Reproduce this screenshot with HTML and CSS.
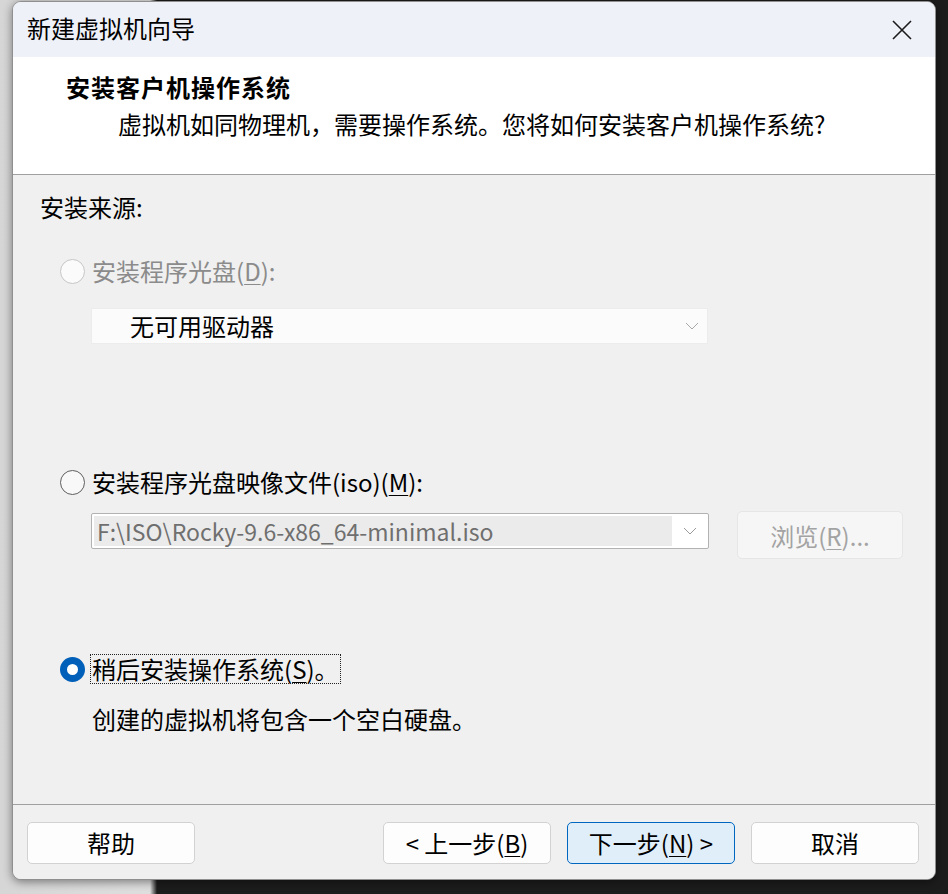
FILE: index.html
```html
<!DOCTYPE html>
<html lang="zh-CN">
<head>
<meta charset="utf-8">
<title>新建虚拟机向导</title>
<link rel="stylesheet" href="styles.css">
</head>
<body>
<div class="backdrop">
  <div class="window">
    <div class="titlebar">
      <span class="title">新建虚拟机向导</span>
      <span class="close" aria-label="关闭">
        <svg width="22" height="22" viewBox="0 0 22 22"><path d="M2 2 L20 20 M20 2 L2 20" stroke="#1b1b1b" stroke-width="1.6" fill="none"/></svg>
      </span>
    </div>
    <div class="header">
      <div class="h-title">安装客户机操作系统</div>
      <div class="h-sub">虚拟机如同物理机，需要操作系统。您将如何安装客户机操作系统?</div>
    </div>
    <div class="content">
      <div class="section-label">安装来源:</div>

      <div class="radio-row disabled row-disc">
        <span class="radio"></span>
        <span class="label">安装程序光盘(<u>D</u>):</span>
      </div>
      <div class="select disabled-select">
        <span class="select-text">无可用驱动器</span>
        <svg class="chev" width="14" height="8" viewBox="0 0 14 8"><path d="M1 1 L7 7 L13 1" stroke="#a8a8a8" stroke-width="1" fill="none"/></svg>
      </div>

      <div class="radio-row row-iso">
        <span class="radio"></span>
        <span class="label">安装程序光盘映像文件(iso)(<u>M</u>):</span>
      </div>
      <div class="iso-row">
        <div class="combo">
          <span class="combo-field">F:\ISO\Rocky-9.6-x86_64-minimal.iso</span>
          <span class="combo-btn">
            <svg width="14" height="8" viewBox="0 0 14 8"><path d="M1 1 L7 7 L13 1" stroke="#9a9a9a" stroke-width="1" fill="none"/></svg>
          </span>
        </div>
        <div class="browse">浏览(<u>R</u>)...</div>
      </div>

      <div class="radio-row row-later">
        <span class="radio checked"></span>
        <span class="label focus">稍后安装操作系统(<u>S</u>)。</span>
      </div>
      <div class="desc">创建的虚拟机将包含一个空白硬盘。</div>
    </div>
    <div class="footer">
      <div class="btn">帮助</div>
      <div class="spacer"></div>
      <div class="btn">&lt; 上一步(<u>B</u>)</div>
      <div class="btn primary">下一步(<u>N</u>) &gt;</div>
      <div class="btn">取消</div>
    </div>
  </div>
</div>
</body>
</html>
```
FILE: styles.css
```css
* { box-sizing: border-box; }
html, body { margin: 0; padding: 0; }
body {
  width: 948px;
  height: 894px;
  overflow: hidden;
  font-family: "Noto Sans CJK SC", "Noto Sans", sans-serif;
  font-size: 24px;
  color: #000;
  background: linear-gradient(90deg, #d6d6d6 0, #dedede 150px, #1c1c1c 157px, #1c1c1c 100%);
}
.backdrop {
  padding: 1px 0 0 12px;
  height: 894px;
}
.window {
  width: 924px;
  height: 879px;
  border: 1px solid #8f8f8f;
  border-radius: 9px;
  overflow: hidden;
  background: #f0f0f0;
  display: flex;
  flex-direction: column;
  box-shadow: 0 2px 10px rgba(0,0,0,0.45);
}
.titlebar {
  height: 55px;
  flex: none;
  background: #eff1f8;
  display: flex;
  align-items: center;
  padding-left: 14px;
  padding-right: 22px;
}
.title {
  flex: 1;
  line-height: 30px;
  padding-bottom: 3px;
}
.close {
  display: flex;
  width: 22px;
  height: 22px;
}
.header {
  height: 118px;
  flex: none;
  background: #ffffff;
  border-bottom: 1px solid #a0a0a0;
  padding-top: 15px;
}
.h-title {
  font-weight: bold;
  line-height: 30px;
  padding-left: 53px;
  letter-spacing: 1px;
}
.h-sub {
  line-height: 30px;
  padding-left: 105px;
  margin-top: 7px;
}
.content {
  height: 630px;
  flex: none;
  background: #f0f0f0;
  border-bottom: 1px solid #a0a0a0;
  padding-top: 17px;
  padding-left: 27px;
  display: flex;
  flex-direction: column;
  align-items: flex-start;
}
.section-label { line-height: 30px; }
.radio-row {
  display: flex;
  align-items: center;
  height: 30px;
  padding-left: 20px;
  gap: 5px;
}
.row-disc { margin-top: 34px; }
.row-iso { margin-top: 123px; }
.row-later { margin-top: 95px; }
.radio {
  width: 25px;
  height: 25px;
  border-radius: 50%;
  border: 1.5px solid #5e5e5e;
  background: #f8f8f8;
  flex: none;
}
.radio-row.disabled .radio {
  border-color: #c6c6c6;
  background: #fbfbfb;
}
.radio.checked {
  border: 7px solid #005fb8;
  background: #ffffff;
}
.label {
  line-height: 30px;
  padding: 0 2px;
}
.radio-row.disabled .label { color: #8b8b8b; }
.label.focus { outline: 1px dotted #222; outline-offset: -1px; }
u { text-underline-offset: 3px; text-decoration-thickness: 1px; }

.select {
  margin-top: 22px;
  margin-left: 51px;
  width: 617px;
  height: 36px;
  display: flex;
  align-items: center;
  background: #fbfbfb;
  border: 1px solid #ececec;
  padding-left: 38px;
  padding-right: 8px;
}
.select-text { flex: 1; line-height: 30px; }
.chev { flex: none; }

.iso-row {
  margin-top: 14px;
  margin-left: 51px;
  display: flex;
  align-items: flex-start;
  gap: 28px;
}
.combo {
  margin-top: 2px;
  width: 618px;
  height: 36px;
  border: 1px solid #b2b2b2;
  border-radius: 2px;
  background: #ffffff;
  display: flex;
  padding: 2px 0 2px 2px;
}
.combo-field {
  width: 578px;
  background: #ebebeb;
  color: #6f6f6f;
  line-height: 30px;
  padding-left: 3px;
  font-size: 23px;
  white-space: nowrap;
}
.combo-btn {
  flex: 1;
  display: flex;
  align-items: center;
  justify-content: center;
}
.browse {
  width: 166px;
  height: 48px;
  border: 1px solid #e6e6e6;
  border-radius: 5px;
  background: #f6f6f6;
  color: #a3a3a3;
  display: flex;
  align-items: center;
  justify-content: center;
}
.desc {
  margin-top: 20px;
  margin-left: 52px;
  line-height: 30px;
}
.footer {
  flex: 1;
  display: flex;
  align-items: flex-start;
  padding: 17px 16px 0 14px;
  gap: 16px;
  background: #f0f0f0;
}
.spacer { flex: 1; }
.btn {
  width: 168px;
  height: 42px;
  border: 1px solid #d2d2d2;
  border-radius: 5px;
  background: #fdfdfd;
  display: flex;
  align-items: center;
  justify-content: center;
  line-height: 30px;
}
.btn.primary {
  background: #e0eef9;
  border-color: #0067c0;
}
```
